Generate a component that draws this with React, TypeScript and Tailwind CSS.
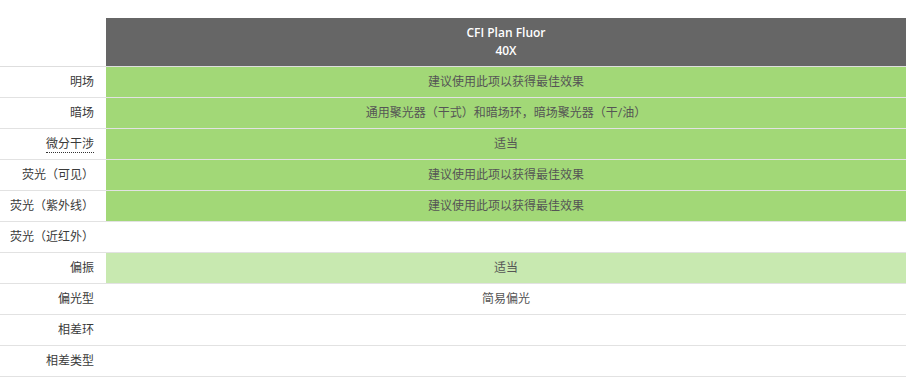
import React from 'react';

type Row = { label: string; value: string; tone: 'green' | 'light' | 'none'; abbr?: boolean };

const rows: Row[] = [
  { label: '明场', value: '建议使用此项以获得最佳效果', tone: 'green' },
  { label: '暗场', value: '通用聚光器（干式）和暗场环，暗场聚光器（干/油）', tone: 'green' },
  { label: '微分干涉', value: '适当', tone: 'green', abbr: true },
  { label: '荧光（可见）', value: '建议使用此项以获得最佳效果', tone: 'green' },
  { label: '荧光（紫外线）', value: '建议使用此项以获得最佳效果', tone: 'green' },
  { label: '荧光（近红外）', value: '', tone: 'none' },
  { label: '偏振', value: '适当', tone: 'light' },
  { label: '偏光型', value: '简易偏光', tone: 'none' },
  { label: '相差环', value: '', tone: 'none' },
  { label: '相差类型', value: '', tone: 'none' },
];

const toneClass = {
  green: 'bg-[#a2d877]',
  light: 'bg-[#c8e9b0]',
  none: 'bg-white',
};

export default function App() {
  return (
    <div className="bg-white w-[918px] h-[387px] pt-[18px] font-['Open_Sans','Noto_Sans_CJK_SC',sans-serif] text-[12px]">
      <table className="w-[906px] border-collapse table-fixed">
        <colgroup>
          <col className="w-[106px]" />
          <col />
        </colgroup>
        <thead>
          <tr className="border-b border-[#dedede]">
            <th className="bg-white h-[48px]" />
            <th className="bg-[#666666] h-[48px] text-white font-semibold text-center leading-[18px] p-0">
              CFI Plan Fluor
              <br />
              40X
            </th>
          </tr>
        </thead>
        <tbody>
          {rows.map((row) => (
            <tr key={row.label} className="border-b border-[#e2e2e2]">
              <td className="h-[31px] p-0 pr-[12px] text-right text-[#3a3a3a] whitespace-nowrap">
                {row.abbr ? (
                  <abbr className="no-underline border-b border-dotted border-[#333]">{row.label}</abbr>
                ) : (
                  row.label
                )}
              </td>
              <td className={`h-[31px] p-0 text-center text-[#555] ${toneClass[row.tone]}`}>{row.value}</td>
            </tr>
          ))}
        </tbody>
      </table>
    </div>
  );
}
